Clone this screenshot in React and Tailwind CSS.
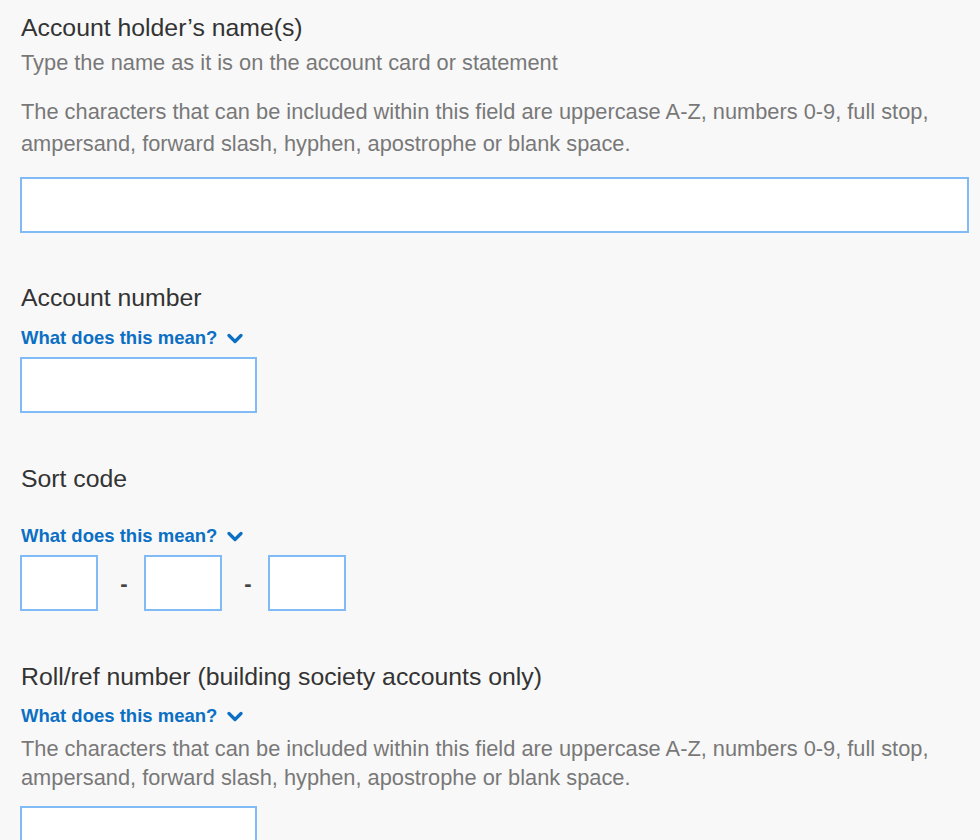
import React from "react";

const font = { fontFamily: '"Liberation Sans", Arial, sans-serif' };

function Chevron() {
  return (
    <svg width="16" height="11" viewBox="0 0 16 11" className="ml-[10px]" aria-hidden="true">
      <path d="M2 2.5 L8 8.5 L14 2.5" fill="none" stroke="#0b6fc4" strokeWidth="3.2" strokeLinecap="round" strokeLinejoin="round" />
    </svg>
  );
}

function Link({ className = "" }) {
  return (
    <div className={"flex items-center h-[24px] text-[18.5px] font-bold text-[#0b6fc4] " + className}>
      <span>What does this mean?</span>
      <Chevron />
    </div>
  );
}

const inputCls = "block h-[56px] bg-white border-2 border-[#80bbf6] outline-none";

export default function App() {
  return (
    <div style={font} className="min-h-[840px] w-[980px] bg-[#f8f8f8] px-[20px] pt-[13px] overflow-hidden">
      <h2 className="text-[24.8px] leading-[30px] text-[#333333] pl-px">Account holder’s name(s)</h2>
      <p className="mt-[4px] text-[21.8px] leading-[32px] text-[#787878] pl-px">Type the name as it is on the account card or statement</p>
      <p className="mt-[17px] text-[21.8px] leading-[32px] text-[#787878] pl-px">
        The characters that can be included within this field are uppercase A-Z, numbers 0-9, full stop, ampersand, forward slash, hyphen, apostrophe or blank space.
      </p>
      <input className={inputCls + " mt-[17px] w-[949px]"} />

      <h2 className="mt-[50px] text-[24.8px] leading-[30px] text-[#333333] pl-px">Account number</h2>
      <Link className="mt-[13px] pl-px" />
      <input className={inputCls + " mt-[7px] w-[237px]"} />

      <h2 className="mt-[51px] text-[24.8px] leading-[30px] text-[#333333] pl-px">Sort code</h2>
      <Link className="mt-[30px] pl-px" />
      <div className="mt-[7px] flex items-center">
        <input className={inputCls + " w-[78px]"} />
        <span className="w-[46px] pl-[6px] text-center text-[22px] font-bold text-[#444]">-</span>
        <input className={inputCls + " w-[78px]"} />
        <span className="w-[46px] pl-[6px] text-center text-[22px] font-bold text-[#444]">-</span>
        <input className={inputCls + " w-[78px]"} />
      </div>

      <h2 className="mt-[51px] text-[24.8px] leading-[30px] text-[#333333] pl-px">Roll/ref number (building society accounts only)</h2>
      <Link className="mt-[12px] pl-px" />
      <p className="mt-[6px] text-[21.8px] leading-[29px] text-[#787878] pl-px">
        The characters that can be included within this field are uppercase A-Z, numbers 0-9, full stop, ampersand, forward slash, hyphen, apostrophe or blank space.
      </p>
      <input className={inputCls + " mt-[14px] w-[237px]"} />
    </div>
  );
}
